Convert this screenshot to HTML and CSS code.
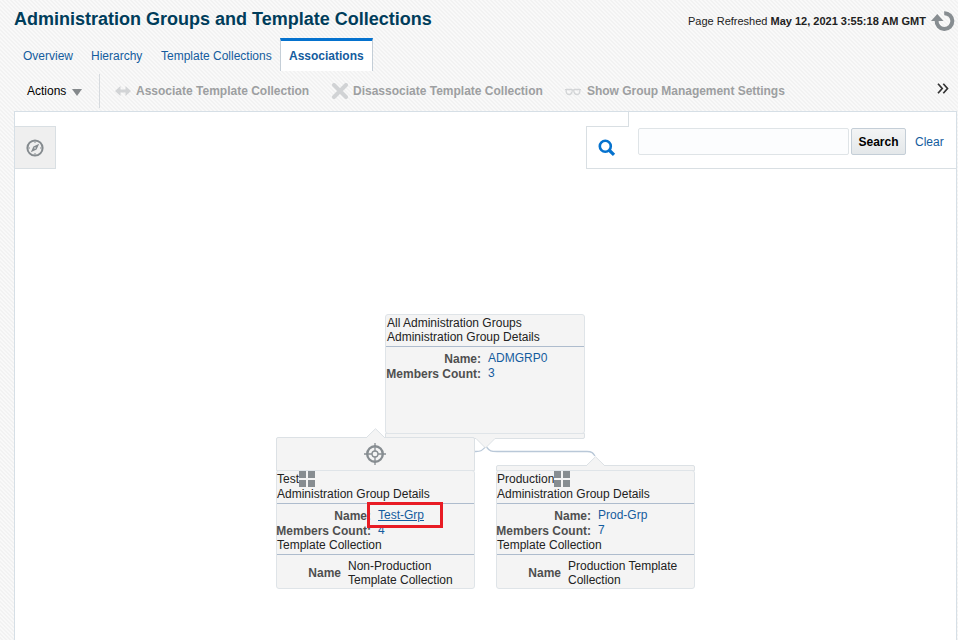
FILE: index.html
```html
<!DOCTYPE html>
<html lang="en">
<head>
<meta charset="utf-8">
<title>Administration Groups and Template Collections</title>
<link rel="stylesheet" href="styles.css">
</head>
<body>
<header class="page-header">
  <h1>Administration Groups and Template Collections</h1>
  <div class="refreshed"><span>Page Refreshed <b>May 12, 2021 3:55:18 AM GMT</b></span>
    <svg class="refresh" width="24" height="22" viewBox="0 0 24 22"><path d="M13.2 3.2A7.9 7.9 0 1 1 5.6 10.5" fill="none" stroke="#878d91" stroke-width="4"/><path d="M0 11L6.3 4 12.5 11z" fill="#878d91"/></svg>
  </div>
</header>
<nav class="tabs">
  <a class="tab overview">Overview</a><a class="tab hierarchy">Hierarchy</a><a class="tab templates">Template Collections</a><a class="tab active">Associations</a>
</nav>
<div class="toolbar">
  <div class="actions">Actions <svg width="10" height="7" viewBox="0 0 10 7"><path d="M0 0H10L5 7z" fill="#85898c"/></svg></div>
  <div class="tool associate"><svg width="16" height="12" viewBox="0 0 16 12"><path d="M0 6L5.5 1V4.5H10.5V1L16 6 10.5 11V7.5H5.5V11z" fill="#d2d4d6"/></svg><span>Associate Template Collection</span></div>
  <div class="tool disassociate"><svg width="16" height="16" viewBox="0 0 16 16"><path d="M2 2L14 14M14 2L2 14" stroke="#d1d3d5" stroke-width="4" stroke-linecap="round"/></svg><span>Disassociate Template Collection</span></div>
  <div class="tool settings"><svg width="16" height="8" viewBox="0 0 16 8"><path d="M0 1.5H2M7 2H9M14 1.5H16" stroke="#d2d4d6"/><path d="M1.5 1.5H6.5Q7.5 1.5 7 4 6.3 6.5 4.2 6.5 1.5 6.5 1.2 4 1 2 1.5 1.5zM9.5 1.5H14.5Q15 2 14.8 4 14.5 6.5 11.8 6.5 9.7 6.5 9 4 8.5 1.5 9.5 1.5z" fill="none" stroke="#d2d4d6" stroke-width="1.3"/></svg><span>Show Group Management Settings</span></div>
  <svg class="more" width="12" height="11" viewBox="0 0 12 11"><path d="M1 .8L5.2 5.5 1 10.2M6.3 .8L10.5 5.5 6.3 10.2" fill="none" stroke="#333" stroke-width="1.7"/></svg>
</div>
<main class="canvas">
  <div class="compass"><svg width="18" height="18" viewBox="0 0 18 18"><circle cx="9" cy="9" r="7.6" fill="none" stroke="#858b8f" stroke-width="2"/><path d="M13.2 4.8L10.6 10.6 4.8 13.2 7.4 7.4z" fill="#858b8f"/><path d="M9 2.5V4M9 14v1.5M2.5 9H4M14 9h1.5" stroke="#858b8f"/><circle cx="9" cy="9" r=".8" fill="#eee"/></svg></div>
  <div class="search-panel">
    <div class="search-tab"><svg width="18" height="18" viewBox="0 0 18 18"><circle cx="7.3" cy="7.3" r="5.5" fill="none" stroke="#0572ce" stroke-width="2.6"/><path d="M11.5 11.5L16 15.8" stroke="#0572ce" stroke-width="3.2"/></svg></div>
    <div class="search-form"><input type="text" aria-label="Search groups"><button>Search</button><a>Clear</a></div>
  </div>

  <svg class="links" width="130" height="26" viewBox="0 0 130 26"><path d="M0 14.5H1C7 14.5 7 13 11 9.5C15 14.5 16 14.5 22 14.5H112C117 14.5 118 16 120 19" fill="none" stroke="#b9c8d8" stroke-width="1.3"/></svg>

  <section class="node root">
    <div class="card">
      <div class="heading">All Administration Groups<br>Administration Group Details</div>
      <dl><dt>Name:</dt><dd>ADMGRP0</dd><dt>Members Count:</dt><dd>3</dd></dl>
    </div>
    <div class="foot"></div>
    <svg class="notch-down" width="19" height="11" viewBox="0 0 19 11"><path d="M0 .5L9.5 10 19 .5V0H0z" fill="#f4f4f4"/><path d="M0 .5L9.5 10 19 .5" fill="none" stroke="#dce1e5"/></svg>
  </section>

  <section class="node test">
    <svg class="notch-up" width="19" height="11" viewBox="0 0 19 11"><path d="M0 11V10L9.5 .7 19 10V11z" fill="#f4f4f4"/><path d="M0 10L9.5 .7 19 10" fill="none" stroke="#dce1e5"/></svg>
    <div class="head"><svg width="22" height="22" viewBox="0 0 22 22"><g fill="none" stroke="#878d91"><circle cx="11" cy="11" r="7.8" stroke-width="2.4"/><circle cx="11" cy="11" r="3" stroke-width="1.3"/><path d="M11 0V8M11 14V22M0 11H8M14 11H22" stroke-width="1.3"/></g></svg></div>
    <div class="card">
      <div class="heading"><div class="group-name">Test<i class="tiles"></i></div>Administration Group Details</div>
      <dl><dt>Name:</dt><dd class="selected">Test-Grp</dd><dt>Members Count:</dt><dd>4</dd></dl>
      <div class="subheading">Template Collection</div>
      <div class="template"><b>Name</b><span>Non-Production<br>Template Collection</span></div>
    </div>
    <div class="highlight"></div>
  </section>

  <section class="node production">
    <svg class="notch-up" width="19" height="11" viewBox="0 0 19 11"><path d="M0 11V10L9.5 .7 19 10V11z" fill="#f4f4f4"/><path d="M0 10L9.5 .7 19 10" fill="none" stroke="#dce1e5"/></svg>
    <div class="head"></div>
    <div class="card">
      <div class="heading"><div class="group-name">Production<i class="tiles"></i></div>Administration Group Details</div>
      <dl><dt>Name:</dt><dd>Prod-Grp</dd><dt>Members Count:</dt><dd>7</dd></dl>
      <div class="subheading">Template Collection</div>
      <div class="template"><b>Name</b><span>Production Template<br>Collection</span></div>
    </div>
  </section>
</main>
</body>
</html>
```
FILE: styles.css
```css
* { box-sizing: border-box; }
body { margin: 0; width: 958px; height: 640px; overflow: hidden; display: flex; flex-direction: column; font: 12px/14px "Liberation Sans", Arial, sans-serif; color: #222; background: repeating-linear-gradient(45deg, #f9f9f9 0 1.414px, #f2f2f2 1.414px 2.828px); }
svg { display: block; flex: none; }
.page-header { height: 38px; flex: none; display: flex; justify-content: space-between; padding-left: 14px; }
h1 { margin: 9px 0 0; font-size: 18px; line-height: 20px; color: #003d5b; white-space: nowrap; }
.refreshed { display: flex; align-items: flex-start; padding: 14px 3px 0 0; font-size: 11px; white-space: nowrap; }
.refresh { margin: -4px 0 0 5px; }
.tabs { display: flex; height: 36px; flex: none; padding-left: 15px; color: #145c9e; }
.tab { height: 33px; padding: 11px 0 0 8px; white-space: nowrap; }
.overview { width: 68px; }
.hierarchy { width: 70px; }
.templates { width: 127px; }
.active { width: 93px; padding: 8px 0 0 8px; border: 1px solid #c4ced7; border-top: 3px solid #0572ce; border-bottom: 0; background: #fff; font-weight: bold; }
.toolbar { height: 37px; flex: none; display: flex; align-items: flex-start; }
.actions { width: 100px; height: 34px; padding: 10px 0 0 27px; border-right: 1px solid #d6dade; color: #000; display: flex; gap: 6px; }
.actions svg { margin-top: 5px; }
.tool { height: 34px; display: flex; align-items: center; color: #9d9fa1; font-weight: bold; white-space: nowrap; }
.associate { width: 217px; padding-left: 15px; }
.associate svg { margin-right: 5px; }
.disassociate { width: 233px; padding-left: 15px; }
.disassociate svg { margin-right: 5px; }
.settings { padding-left: 15px; letter-spacing: -.03px; }
.settings svg { margin: 2px 6px 0 0; }
.more { margin: 9px 9px 0 auto; }
.canvas { position: relative; flex: 1; width: 943px; margin-left: 14px; border: 1px solid #d6dfe6; border-bottom: 0; background: #fff; display: flex; justify-content: space-between; align-items: flex-start; }
.compass { width: 41px; height: 43px; margin-top: 14px; border: 1px solid #d9dfe3; border-left: 0; background: #efefef; display: grid; place-items: center; padding-right: 1px; }
.search-panel { width: 370px; height: 57px; display: flex; border-bottom: 1px solid #d9dfe3; }
.search-tab { width: 43px; height: 43px; margin-top: 14px; border: 1px solid #d9dfe3; border-width: 1px 0 0 1px; padding: 12px 0 0 11px; }
.search-form { flex: 1; display: flex; padding: 16px 0 0 10px; background: linear-gradient(#d9dfe3, #d9dfe3) 0 0 / 1px 15px no-repeat; margin-left: -1px; }
input { width: 211px; height: 27px; padding: 0; border: 1px solid #dfe4e7; border-radius: 2px; background: #fcfdfe; }
button { width: 55px; height: 27px; margin-left: 2px; padding: 0; border: 1px solid #c4ced7; border-radius: 2px; background: linear-gradient(#f3f4f5, #e4e8ea); font: bold 12px "Liberation Sans", Arial, sans-serif; color: #000; }
.search-form a { margin: 7px 0 0 9px; color: #145c9e; }
.links { position: absolute; left: 460px; top: 325px; }
.node { position: absolute; width: 200px; }
.root { left: 370px; top: 202px; }
.test { left: 261px; top: 325px; }
.production { left: 481px; top: 353px; }
.card { position: relative; border: 1px solid #dfe4e8; border-radius: 3px; background: #f4f4f4; }
.root .card { height: 120px; }
.test .card, .production .card { width: 199px; }
.root .foot { height: 6px; margin-top: -1px; border: 1px solid #dce1e5; border-radius: 0 0 2px 2px; background: #f4f4f4; width: 200px; }
.notch-down { position: relative; margin: -1px auto 0 91px; }
.notch-up { position: relative; z-index: 1; margin: -9px 0 -2px 90px; }
.head { width: 199px; border: 1px solid #dce1e5; border-radius: 2px 2px 0 0; background: #f4f4f4; display: grid; place-items: center; }
.test .head { height: 34px; margin-bottom: -1px; padding: 0 2px 1px 0; }
.production .head { height: 6px; margin-bottom: -1px; }
.heading { height: 32px; padding: 1px 0 0; border-bottom: 1px solid #aebccd; }
.root .heading { padding-left: 1px; }
.group-name { height: 16px; padding-top: 1px; display: flex; }
.test .heading, .production .heading { height: 33px; padding-top: 0; }
.tiles { width: 16px; height: 16px; margin-top: -1px; background: linear-gradient(#878d91, #878d91) 0 0 / 7px 7px no-repeat, linear-gradient(#878d91, #878d91) 9px 0 / 7px 7px no-repeat, linear-gradient(#878d91, #878d91) 0 9px / 7px 7px no-repeat, linear-gradient(#878d91, #878d91) 9px 9px / 7px 7px no-repeat; }
dl { margin: 0; padding-top: 4px; display: grid; grid-template-columns: 95px 1fr; column-gap: 7px; grid-auto-rows: 15px; }
.test dl, .production dl { grid-template-columns: 94px 1fr; }
dt { display: flex; justify-content: flex-end; font-weight: bold; color: #4f4f4f; white-space: nowrap; padding-top: 1px; }
dd { margin: 0; color: #145c9e; }
.selected { text-decoration: underline; }
.subheading { height: 17px; border-bottom: 1px solid #aebccd; }
.template { height: 33px; padding-top: 2px; display: grid; grid-template-columns: 64px 1fr; column-gap: 7px; align-items: center; }
.template b { text-align: right; color: #4f4f4f; }
.highlight { position: absolute; left: 91px; top: 65px; width: 76px; height: 26px; border: 3px solid #e81c24; }
```
